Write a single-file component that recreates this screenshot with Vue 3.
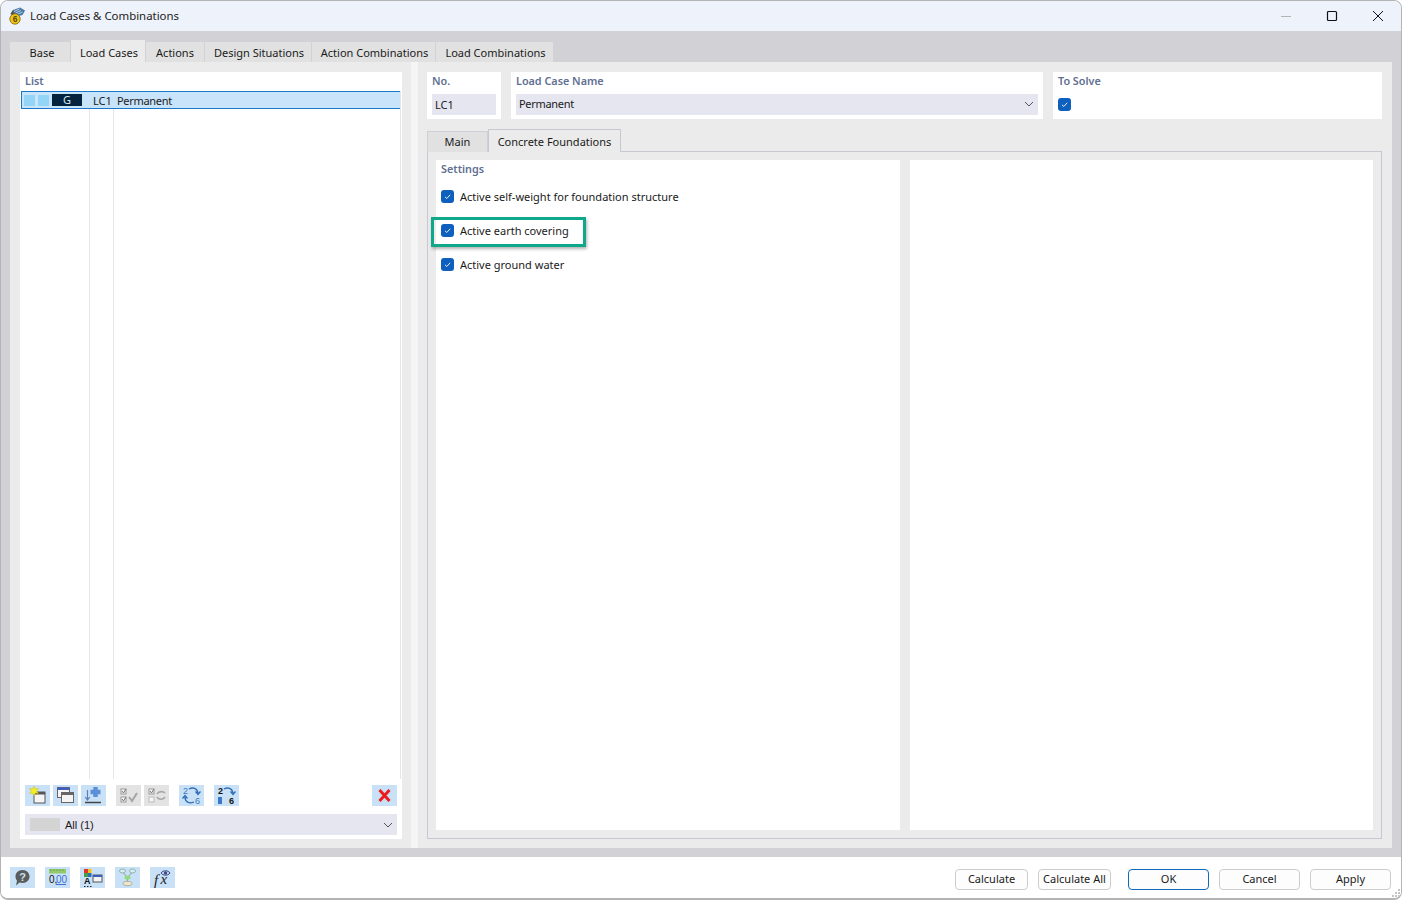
<script setup>
const topTabs = [
  { label: 'Base', width: 61 },
  { label: 'Load Cases', width: 75, active: true },
  { label: 'Actions', width: 59 },
  { label: 'Design Situations', width: 107 },
  { label: 'Action Combinations', width: 124 },
  { label: 'Load Combinations', width: 118 },
]
const settings = [
  { label: 'Active self-weight for foundation structure' },
  { label: 'Active earth covering', marked: true },
  { label: 'Active ground water' },
]
</script>

<template>
  <div class="window">
    <header class="titlebar">
      <svg class="logo" width="18" height="18" viewBox="0 0 18 18">
        <path d="M2.5 7 L5 3 L12 0.5 L17 3.5 L14.5 8 L7 10 Z" fill="#4a78a4" />
        <path d="M6 4.5 L11.5 2 M7.5 6 L13 3.5 M9 7.5 L14.5 5" stroke="#c3dbef" stroke-width="0.9" />
        <path d="M2.5 7 L5 3 L6 8 Z" fill="#5c4c34" />
        <circle cx="7" cy="12" r="5.2" fill="#f0c419" stroke="#7d6312" stroke-width="0.8" />
        <text x="7" y="15.2" class="logo-six">6</text>
      </svg>
      <span class="window-title">Load Cases &amp; Combinations</span>
      <div class="window-controls">
        <svg width="12" height="12" viewBox="0 0 12 12"><path d="M1 6.5 H11" stroke="#b4b4b4" stroke-width="1" /></svg>
        <svg width="12" height="12" viewBox="0 0 12 12"><rect x="1.5" y="1.5" width="9" height="9" rx="1" fill="none" stroke="#111" stroke-width="1.2" /></svg>
        <svg width="12" height="12" viewBox="0 0 12 12"><path d="M1 1 L11 11 M11 1 L1 11" stroke="#111" stroke-width="1" /></svg>
      </div>
    </header>

    <main class="content">
      <nav class="top-tabs">
        <div
          v-for="tab in topTabs"
          :key="tab.label"
          class="top-tab"
          :class="{ active: tab.active }"
          :style="{ width: tab.width + 'px' }"
        >{{ tab.label }}</div>
      </nav>

      <div class="tab-page">
        <section class="list-panel">
          <div class="caption list-caption">List</div>
          <div class="list-body">
            <div class="col-line line-a"></div>
            <div class="col-line line-b"></div>
            <div class="col-line line-c"></div>
            <div class="list-row">
              <span class="swatch"></span>
              <span class="swatch"></span>
              <span class="type-tag">G</span>
              <span class="row-no">LC1</span>
              <span class="row-name">Permanent</span>
            </div>
          </div>

          <div class="list-tools">
            <div class="tool-group">
              <button class="tool">
                <svg width="25" height="21" viewBox="0 0 25 21">
                  <rect x="9" y="7" width="11" height="11" fill="#f4f4f4" stroke="#555" />
                  <rect x="9" y="7" width="11" height="2.5" fill="#555" />
                  <path d="M9 1 L10.3 4 L13.5 3.5 L11.5 6 L13.5 8.5 L10.3 8 L9 11 L7.7 8 L4.5 8.5 L6.5 6 L4.5 3.5 L7.7 4 Z" fill="#f5ee20" stroke="#c9b400" stroke-width="0.4" />
                </svg>
              </button>
              <button class="tool">
                <svg width="25" height="21" viewBox="0 0 25 21">
                  <rect x="4.5" y="2.5" width="12" height="10" fill="#f4f4f4" stroke="#666" />
                  <rect x="4.5" y="2.5" width="12" height="2.5" fill="#3f5fbf" />
                  <rect x="8.5" y="7.5" width="12" height="10" fill="#f4f4f4" stroke="#666" />
                  <rect x="8.5" y="7.5" width="12" height="2.5" fill="#666" />
                </svg>
              </button>
              <button class="tool">
                <svg width="25" height="21" viewBox="0 0 25 21">
                  <path d="M12.3 2 H16.7 V4.8 H19.5 V9.2 H16.7 V12 H12.3 V9.2 H9.5 V4.8 H12.3 Z" fill="#5b8fd6" />
                  <path d="M6.5 5 V14.5 M4.2 12 L6.5 15 L8.8 12" fill="none" stroke="#5a7fb5" stroke-width="1.2" />
                  <path d="M4 17.5 H20" stroke="#444" stroke-width="1.3" />
                </svg>
              </button>
            </div>
            <div class="tool-group">
              <button class="tool off">
                <svg width="25" height="21" viewBox="0 0 25 21">
                  <rect x="5" y="4" width="5" height="5" fill="#f6f6f6" stroke="#9a9a9a" />
                  <rect x="5" y="12" width="5" height="5" fill="#f6f6f6" stroke="#9a9a9a" />
                  <path d="M6 6 L7.5 8 L10 4 M6 14 L7.5 16 L10 12" fill="none" stroke="#777" />
                  <path d="M13 12 L16 16 L21 8" fill="none" stroke="#a5a5a5" stroke-width="2" />
                </svg>
              </button>
              <button class="tool off">
                <svg width="25" height="21" viewBox="0 0 25 21">
                  <rect x="5" y="4" width="5" height="5" fill="#f6f6f6" stroke="#9a9a9a" />
                  <rect x="5" y="12" width="5" height="5" fill="#f6f6f6" stroke="#bbb" />
                  <path d="M6 6 L7.5 8 L10 4" fill="none" stroke="#777" />
                  <path d="M13 9 C15 6 19 6 21 8 M21 12 C19 15 15 15 13 12" fill="none" stroke="#a8a8a8" stroke-width="1.6" />
                </svg>
              </button>
            </div>
            <button class="tool">
              <svg width="25" height="21" viewBox="0 0 25 21">
                <text x="4" y="9" class="tool-num blue">2</text>
                <text x="16" y="19" class="tool-num blue">6</text>
                <path d="M10 4 C14 2 18 3 19 8 M16.5 6.5 L19 9.5 L21.5 6.5" fill="none" stroke="#2f6db5" stroke-width="1.3" />
                <path d="M15 17 C10 19 6 17 6 12 M3.5 13.5 L6 10.5 L8.5 13.5" fill="none" stroke="#2f6db5" stroke-width="1.3" />
              </svg>
            </button>
            <button class="tool">
              <svg width="25" height="21" viewBox="0 0 25 21">
                <text x="4" y="9" class="tool-num">2</text>
                <text x="15" y="19" class="tool-num">6</text>
                <rect x="4" y="12" width="4" height="7" fill="#3b78c2" />
                <path d="M10 4 C14 2 18 3 19 8 M16.5 6.5 L19 9.5 L21.5 6.5" fill="none" stroke="#2f6db5" stroke-width="1.3" />
              </svg>
            </button>
            <button class="tool tool-delete">
              <svg width="25" height="21" viewBox="0 0 25 21">
                <path d="M7.5 5 L17.5 16 M17.5 5 L7.5 16" stroke="#ee1c1c" stroke-width="3" />
              </svg>
            </button>
          </div>

          <div class="combo filter-combo">
            <span class="filter-swatch"></span>
            <span class="filter-text">All (1)</span>
            <svg class="chevron" width="10" height="6" viewBox="0 0 10 6"><path d="M1 1 L5 5 L9 1" fill="none" stroke="#555" /></svg>
          </div>
        </section>

        <div class="divider"><div class="splitter"></div></div>

        <section class="detail">
          <div class="fields">
            <div class="field field-no">
              <div class="caption">No.</div>
              <div class="input">LC1</div>
            </div>
            <div class="field field-name">
              <div class="caption">Load Case Name</div>
              <div class="combo name-combo">
                <span>Permanent</span>
                <svg class="chevron" width="10" height="6" viewBox="0 0 10 6"><path d="M1 1 L5 5 L9 1" fill="none" stroke="#555" /></svg>
              </div>
            </div>
            <div class="field field-solve">
              <div class="caption">To Solve</div>
              <span class="check">
                <svg width="13" height="13" viewBox="0 0 13 13"><path d="M4 6.8 L5.8 8.5 L9.2 4.8" fill="none" stroke="#e8f0fa" stroke-width="1" /></svg>
              </span>
            </div>
          </div>

          <div class="sub-tabs">
            <div class="sub-tab">Main</div>
            <div class="sub-tab active">Concrete Foundations</div>
          </div>

          <div class="sub-page">
            <div class="settings-panel">
              <div class="caption">Settings</div>
              <div class="settings-list">
                <div v-for="item in settings" :key="item.label" class="setting" :class="{ marked: item.marked }">
                  <span class="check">
                    <svg width="13" height="13" viewBox="0 0 13 13"><path d="M4 6.8 L5.8 8.5 L9.2 4.8" fill="none" stroke="#e8f0fa" stroke-width="1" /></svg>
                  </span>
                  <span>{{ item.label }}</span>
                </div>
              </div>
            </div>
            <div class="empty-panel"></div>
          </div>
        </section>
      </div>
    </main>

    <footer class="footer">
      <div class="footer-tools">
        <button class="tool">
          <svg width="25" height="21" viewBox="0 0 25 21">
            <path d="M12.5 3 C17 3 19.5 6 19.5 9.5 C19.5 13 17 16 12.5 16 C11.5 16 10.5 15.8 9.5 15.5 L6 18.5 L7 13.8 C6 12.5 5.5 11 5.5 9.5 C5.5 6 8 3 12.5 3 Z" fill="#5b5b5b" />
            <text x="12.5" y="13.5" class="help-mark">?</text>
          </svg>
        </button>
        <button class="tool">
          <svg width="25" height="21" viewBox="0 0 25 21">
            <rect x="4" y="2" width="17" height="4.5" fill="#93c96b" />
            <path d="M6 2 V4 M9 2 V4 M12 2 V4 M15 2 V4 M18 2 V4" stroke="#5f9a3c" stroke-width="0.7" />
            <text x="4" y="16" class="num-black">0,</text>
            <text x="11" y="16" class="num-blue">00</text>
            <path d="M11 17.5 H21" stroke="#3f6fd6" />
          </svg>
        </button>
        <button class="tool">
          <svg width="25" height="21" viewBox="0 0 25 21">
            <rect x="4" y="2" width="4" height="4" fill="#e0342c" />
            <rect x="8" y="2" width="3.5" height="4" fill="#f2c318" />
            <rect x="4" y="6" width="4" height="4" fill="#43a047" />
            <rect x="8" y="6" width="3.5" height="4" fill="#2f6db5" />
            <text x="4" y="17" class="tool-num">A</text>
            <path d="M4 19.5 H5.5 M7 19.5 H8.5 M10 19.5 H11.5" stroke="#222" />
            <rect x="13" y="8" width="9" height="7" fill="#f4f4f4" stroke="#555" />
            <rect x="13" y="8" width="9" height="2" fill="#3f5fbf" />
          </svg>
        </button>
        <button class="tool">
          <svg width="25" height="21" viewBox="0 0 25 21">
            <ellipse cx="7.5" cy="4" rx="3" ry="2" fill="#d6ecf7" stroke="#8fb3a8" />
            <ellipse cx="17.5" cy="4" rx="3" ry="2" fill="#d6ecf7" stroke="#8fb3a8" />
            <path d="M8.5 6 L12 10 M16.5 6 L13 10 M12.5 12 V15" stroke="#9a9a9a" />
            <ellipse cx="12.5" cy="10.5" rx="3" ry="2" fill="#8fdc7c" />
            <ellipse cx="12.5" cy="16.5" rx="4.5" ry="2.2" fill="#efe6c8" stroke="#aaa" />
          </svg>
        </button>
        <button class="tool">
          <svg width="25" height="21" viewBox="0 0 25 21">
            <text x="4" y="18" class="formula">f</text>
            <text x="10.5" y="17" class="formula">x</text>
            <path d="M11 6 C13 3 18 3 20 6 C18 9 13 9 11 6 Z" fill="#cfd6ea" stroke="#3c4a8a" />
            <circle cx="15.5" cy="6" r="1.7" fill="#3c4a8a" />
          </svg>
        </button>
      </div>
      <div class="footer-buttons">
        <div class="calc-buttons">
          <button class="btn calc">Calculate</button>
          <button class="btn calc">Calculate All</button>
        </div>
        <div class="dialog-buttons">
          <button class="btn primary">OK</button>
          <button class="btn">Cancel</button>
          <button class="btn">Apply</button>
        </div>
      </div>
      <svg class="grip" width="10" height="10" viewBox="0 0 10 10">
        <path d="M7 1 H9 V3 H7 Z M4 4 H6 V6 H4 Z M7 4 H9 V6 H7 Z M1 7 H3 V9 H1 Z M4 7 H6 V9 H4 Z M7 7 H9 V9 H7 Z" fill="#c4c4c4" />
      </svg>
    </footer>
  </div>
</template>

<style scoped>
.window {
  position: relative;
  box-sizing: border-box;
  width: 1402px;
  height: 900px;
  display: flex;
  flex-direction: column;
  overflow: hidden;
  border: 1px solid #b4b4b4;
  border-bottom-width: 2px;
  border-radius: 8px;
  background: #fff;
  font-family: "Noto Sans", "Open Sans", sans-serif;
  font-size: 11px;
  color: #1a1a1a;
}
button {
  font: inherit;
  color: inherit;
  margin: 0;
  padding: 0;
}

.titlebar {
  flex: 0 0 30px;
  display: flex;
  align-items: center;
  padding-left: 7px;
  background: #eef2fa;
}
.logo { margin-right: 4px; }
.logo-six {
  font-family: "Liberation Sans", sans-serif;
  font-size: 8.5px;
  font-weight: 700;
  fill: #5b4a10;
  text-anchor: middle;
}
.window-title {
  font-size: 11.4px;
  color: #222;
  padding-bottom: 1px;
}
.window-controls {
  margin-left: auto;
  display: flex;
  gap: 34px;
  padding-right: 17px;
}

.content {
  flex: 1;
  display: flex;
  flex-direction: column;
  padding: 9px;
  background: #d2d1d6;
  min-height: 0;
}
.top-tabs {
  flex: 0 0 22px;
  display: flex;
  align-items: flex-end;
}
.top-tab {
  box-sizing: border-box;
  height: 20px;
  padding-left: 2px;
  display: flex;
  align-items: center;
  justify-content: center;
  background: #e1e1e1;
  border-right: 1px solid #d2d1d6;
}
.top-tab:first-child { padding-left: 4px; }
.top-tab:nth-child(3) { padding-left: 0; }
.top-tab.active {
  height: 22px;
  padding-top: 2px;
  background: #ebebeb;
}
.tab-page {
  flex: 1;
  display: flex;
  padding: 10px 10px 9px;
  background: #ebebeb;
  min-height: 0;
}

.caption {
  color: #5f6f92;
  font-weight: 600;
  font-size: 10.8px;
  line-height: 14px;
}

.list-panel {
  flex: 0 0 382px;
  display: flex;
  flex-direction: column;
  padding: 2px 5px 4px 1px;
  box-sizing: border-box;
  background: #fff;
}
.list-caption { padding-left: 4px; height: 17px; }
.list-body {
  position: relative;
  flex: 1;
  margin-right: -4px;
}
.col-line {
  position: absolute;
  top: 0;
  bottom: 0;
  width: 1px;
  background: #e6e6e6;
}
.line-a { left: 68px; }
.line-b { left: 92px; }
.line-c { left: 379px; }
.list-row {
  position: relative;
  box-sizing: border-box;
  height: 18px;
  width: 379px;
  display: flex;
  align-items: center;
  background: #c8e4fb;
  border-top: 1px solid #1b78c8;
  border-bottom: 1px solid #1b78c8;
  border-left: 1px solid #1b78c8;
}
.swatch {
  width: 11px;
  height: 11px;
  margin-left: 2px;
  margin-right: 1px;
  background: #93d5f6;
}
.type-tag {
  width: 30px;
  height: 12px;
  margin-left: 2px;
  background: #04233f;
  color: #d8e8f5;
  text-align: center;
  line-height: 12px;
}
.row-no { margin-left: 11px; width: 24px; }
.row-name { letter-spacing: -0.3px; }
.list-tools {
  display: flex;
  gap: 10px;
  align-items: center;
  padding: 6px 0 0 4px;
}
.tool-group { display: flex; gap: 3px; }
.tool {
  width: 25px;
  height: 21px;
  border: 0;
  background: #c8e1f7;
  display: block;
}
.tool svg { display: block; }
.tool.off { background: #e3e3e3; }
.tool-delete { margin-left: auto; }
.tool-num {
  font-family: "Liberation Sans", sans-serif;
  font-size: 9px;
  font-weight: 700;
  fill: #111;
}
.tool-num.blue { fill: #3f77bb; font-weight: 400; }
.combo {
  display: flex;
  align-items: center;
  background: #e6e6f0;
}
.chevron { margin-left: auto; }
.filter-combo {
  height: 21px;
  margin: 8px 0 0 4px;
  padding: 0 4px 0 5px;
}
.filter-swatch {
  width: 30px;
  height: 13px;
  background: #d4d4d4;
  margin-right: 5px;
}
.filter-text {
  font-family: "Liberation Sans", sans-serif;
  font-size: 11px;
}

.divider {
  flex: 0 0 25px;
  display: flex;
  margin: -10px 0 -9px;
}
.splitter {
  width: 7px;
  margin-left: 9px;
  background: #f5f5f5;
}
.detail {
  flex: 1;
  display: flex;
  flex-direction: column;
  min-width: 0;
}
.fields {
  display: flex;
  gap: 10px;
  height: 47px;
}
.field {
  box-sizing: border-box;
  background: #fff;
  padding: 2px 5px 5px;
}
.field-no { flex: 0 0 74px; }
.field-name { flex: 0 0 532px; }
.field-solve { flex: 1; }
.input,
.name-combo {
  box-sizing: border-box;
  height: 21px;
  margin-top: 6px;
  padding-left: 3px;
  background: #e6e6f0;
}
.input { line-height: 22px; }
.name-combo {
  padding-right: 4px;
  padding-bottom: 2px;
  letter-spacing: -0.3px;
}
.field-solve .check { margin-top: 10px; }

.sub-tabs {
  display: flex;
  align-items: flex-end;
  height: 23px;
  margin-top: 10px;
  position: relative;
  z-index: 1;
}
.sub-tab {
  box-sizing: border-box;
  width: 61px;
  height: 21px;
  padding-bottom: 2px;
  display: flex;
  align-items: center;
  justify-content: center;
  background: #e1e1e1;
  border: 1px solid #cfcfd8;
  border-bottom: 0;
}
.sub-tab.active {
  width: 133px;
  height: 23px;
  padding-bottom: 0;
  background: #ebebeb;
  border-left: 1px solid #c8c8d4;
  border-right: 1px solid #c8c8d4;
  border-top: 1px solid #c8c8d4;
}
.sub-page {
  flex: 1;
  display: flex;
  gap: 10px;
  margin-top: -1px;
  padding: 8px;
  border: 1px solid #c8c8d4;
  min-height: 0;
}
.settings-panel {
  flex: 0 0 464px;
  box-sizing: border-box;
  padding: 2px 5px;
  background: #fff;
}
.empty-panel {
  flex: 1;
  background: #fff;
}
.settings-list {
  display: flex;
  flex-direction: column;
  gap: 14px;
  margin-top: 10px;
}
.setting {
  position: relative;
  height: 20px;
  display: flex;
  align-items: center;
  gap: 6px;
}
.setting.marked::after {
  content: "";
  position: absolute;
  left: -10px;
  top: -3px;
  width: 155px;
  height: 30px;
  box-sizing: border-box;
  border: 3px solid #10a88a;
  box-shadow: 1px 2px 3px rgba(0, 0, 0, 0.3);
}
.check {
  width: 13px;
  height: 13px;
  display: block;
  flex: 0 0 13px;
  border-radius: 3px;
  background: #0f5fbf;
}
.check svg { display: block; }

.footer {
  flex: 0 0 41px;
  position: relative;
  display: flex;
  align-items: center;
  justify-content: space-between;
  padding: 0 10px 0 9px;
  background: #fff;
}
.footer-tools {
  display: flex;
  gap: 10px;
}
.help-mark {
  font-family: "Liberation Sans", sans-serif;
  font-size: 11px;
  font-weight: 700;
  fill: #c8e1f7;
  text-anchor: middle;
}
.num-black,
.num-blue {
  font-family: "Liberation Sans", sans-serif;
  font-size: 10px;
}
.num-black { fill: #111; }
.num-blue { fill: #3f6fd6; }
.formula {
  font-family: "Liberation Serif", serif;
  font-style: italic;
  font-size: 15px;
  fill: #222;
}
.footer-buttons {
  display: flex;
  gap: 17px;
  margin-top: 3px;
}
.calc-buttons,
.dialog-buttons {
  display: flex;
  gap: 10px;
}
.btn {
  box-sizing: border-box;
  width: 81px;
  height: 21px;
  padding-bottom: 2px;
  border: 1px solid #cdcdcd;
  border-radius: 4px;
  background: #fdfdfd;
  text-align: center;
}
.btn.calc { width: 73px; }
.btn.primary { border-color: #0f6cbd; }
.grip {
  position: absolute;
  right: 0;
  bottom: 0;
}
</style>
